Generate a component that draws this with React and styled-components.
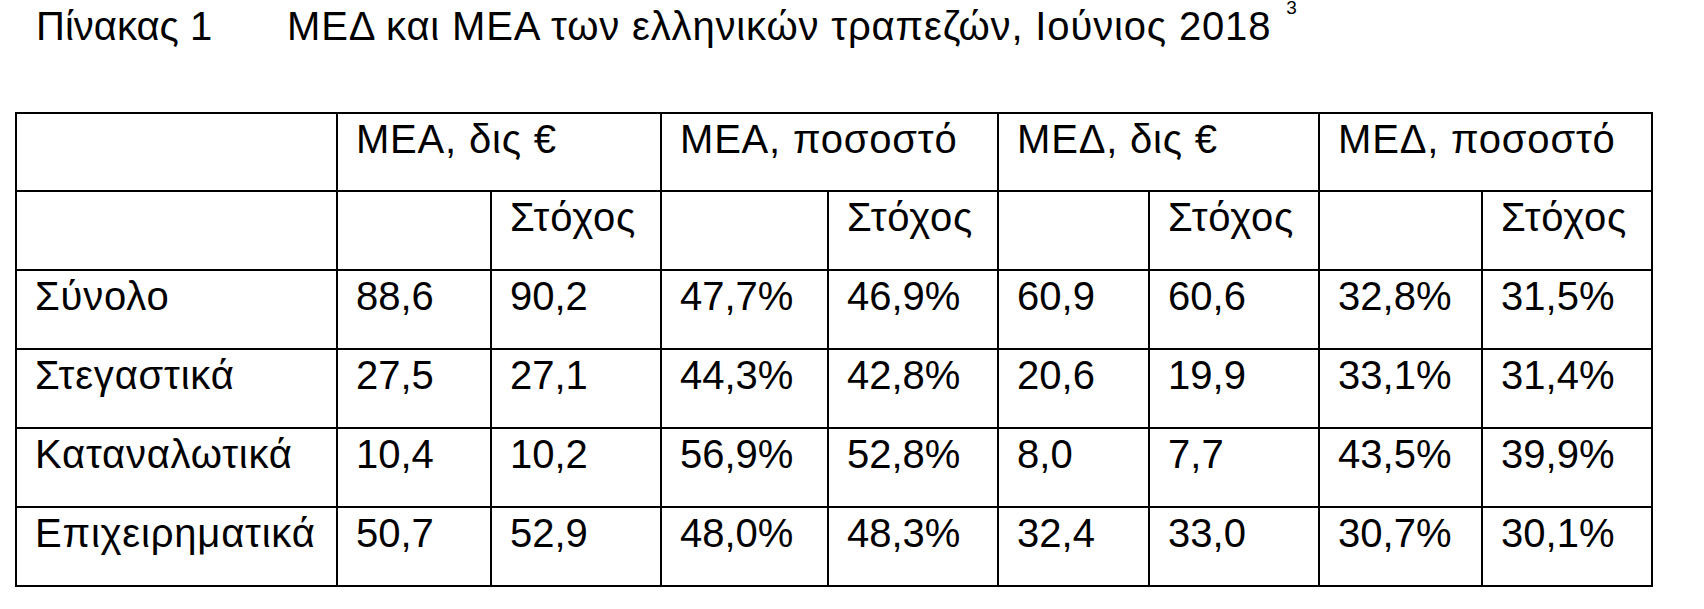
import styled, { createGlobalStyle } from 'styled-components'

const GlobalStyle = createGlobalStyle`
  html, body {
    margin: 0;
    padding: 0;
    background: #fff;
  }
  body {
    font-family: "Liberation Sans", Arial, sans-serif;
    color: #000;
  }
`

const groups = ['ΜΕΑ, δις €', 'ΜΕΑ, ποσοστό', 'ΜΕΔ, δις €', 'ΜΕΔ, ποσοστό']
const widths = [321, 154, 170, 167, 170, 151, 170, 163, 170]

const rows = [
  { name: 'Σύνολο', values: ['88,6', '90,2', '47,7%', '46,9%', '60,9', '60,6', '32,8%', '31,5%'] },
  { name: 'Στεγαστικά', values: ['27,5', '27,1', '44,3%', '42,8%', '20,6', '19,9', '33,1%', '31,4%'] },
  { name: 'Καταναλωτικά', values: ['10,4', '10,2', '56,9%', '52,8%', '8,0', '7,7', '43,5%', '39,9%'] },
  { name: 'Επιχειρηματικά', values: ['50,7', '52,9', '48,0%', '48,3%', '32,4', '33,0', '30,7%', '30,1%'] },
]

const App = () => {
  return (
    <Page>
      <GlobalStyle />
      <Caption>
        <Label>Πίνακας 1</Label>
        <Title>
          ΜΕΔ και ΜΕΑ των ελληνικών τραπεζών, Ιούνιος 2018 <Note>3</Note>
        </Title>
      </Caption>

      <Table>
        <colgroup>
          {widths.map((w, i) => (
            <col key={i} style={{ width: w }} />
          ))}
        </colgroup>
        <tbody>
          <Row $first>
            <Cell />
            {groups.map((g) => (
              <Cell key={g} colSpan={2} $text>{g}</Cell>
            ))}
          </Row>
          <Row>
            <Cell />
            {groups.map((g) => [
              <Cell key={g + 'a'} />,
              <Cell key={g + 'b'} $text>Στόχος</Cell>,
            ])}
          </Row>
          {rows.map((r) => (
            <Row key={r.name}>
              <Cell $text>{r.name}</Cell>
              {r.values.map((v, i) => (
                <Cell key={i}>{v}</Cell>
              ))}
            </Row>
          ))}
        </tbody>
      </Table>
    </Page>
  )
}

export default App

const Page = styled.div`
  padding: 3px 16px 0 15px;
`

const Caption = styled.div`
  display: flex;
  align-items: baseline;
  padding-left: 21px;
  font-size: 40px;
  line-height: 46px;
  white-space: nowrap;
`

const Label = styled.span`
  width: 251px;
  flex: none;
`

const Title = styled.span`
  letter-spacing: 0.85px;
`

const Note = styled.sup`
  font-size: 19px;
  line-height: 0;
  vertical-align: 26px;
  margin-left: 3px;
  letter-spacing: 0;
`

const Table = styled.table`
  margin-top: 63px;
  border-collapse: collapse;
  table-layout: fixed;
  width: 1638px;
  font-size: 40px;
`

const Row = styled.tr`
  height: ${(p) => (p.$first ? '78px' : '79px')};
`

const Cell = styled.td`
  border: 2px solid #000;
  padding: 2px 0 0 18px;
  vertical-align: top;
  line-height: 46px;
  white-space: nowrap;
  letter-spacing: ${(p) => (p.$text ? '0.8px' : '0')};
`
